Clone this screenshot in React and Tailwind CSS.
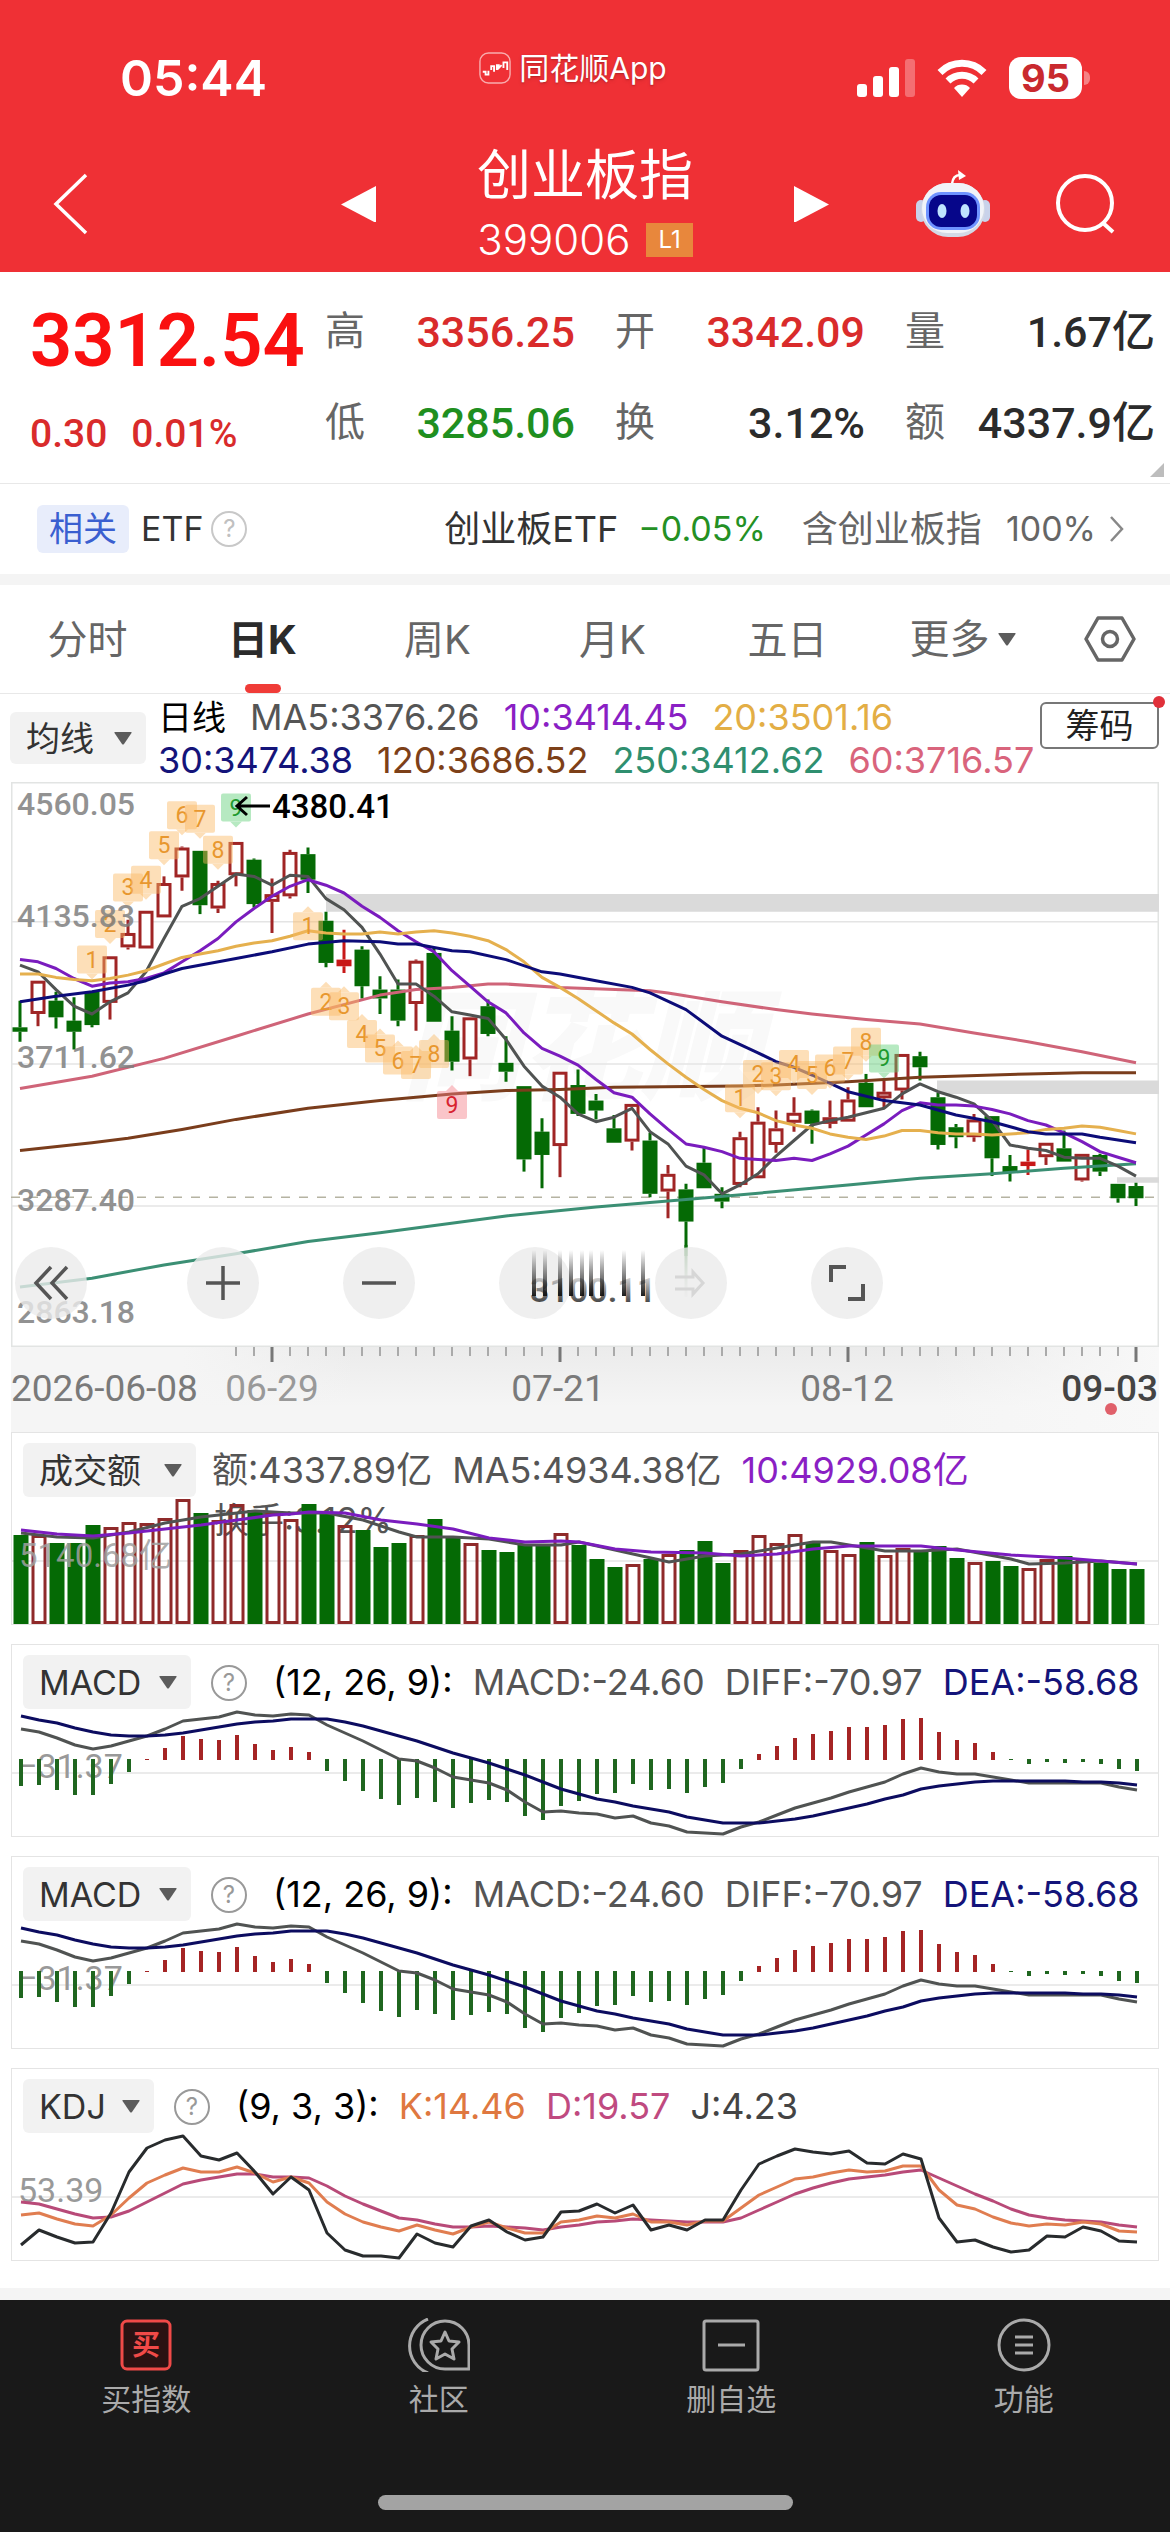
import React, { useState } from "react";

const STEP = 18;
const START = 9;
const WIDTH = 1148;

const xAt = (i) => START + i * STEP;
// Candle and average values are stored in axis units, 509 units per full axis
const yAt = (v) => (v - 3) * 1.11;

// [kind, high, bodyTop, bodyBottom, low], kind: u = up, d = down, f = filled up
const CANDLES = [
  ["d", 200, 224, 228, 237], ["u", 182, 182, 212, 223], ["d", 192, 200, 215, 225],
  ["d", 197, 218, 228, 244], ["d", 192, 192, 222, 224], ["u", 160, 160, 202, 217],
  ["u", 127, 139, 152, 154], ["u", 119, 119, 153, 153], ["u", 88, 94, 125, 125],
  ["u", 61, 62, 89, 101], ["d", 65, 65, 114, 122], ["u", 92, 94, 117, 121],
  ["u", 57, 57, 87, 97], ["d", 72, 73, 113, 116], ["u", 90, 104, 111, 139],
  ["u", 64, 66, 106, 108], ["d", 62, 68, 91, 103], ["d", 120, 128, 166, 170],
  ["f", 136, 163, 169, 175], ["d", 151, 154, 187, 198], ["d", 178, 190, 198, 212],
  ["d", 181, 190, 218, 223], ["u", 163, 164, 203, 227], ["d", 152, 157, 219, 219],
  ["d", 214, 227, 255, 263], ["u", 215, 215, 253, 268], ["d", 199, 205, 230, 232],
  ["d", 232, 256, 264, 273], ["d", 277, 277, 343, 354], ["d", 306, 318, 339, 369],
  ["u", 264, 264, 331, 359], ["d", 262, 276, 302, 304], ["d", 284, 290, 299, 307],
  ["d", 303, 315, 328, 328], ["u", 293, 293, 327, 335], ["d", 319, 326, 374, 377],
  ["u", 348, 356, 372, 396], ["d", 365, 370, 399, 466], ["d", 332, 346, 369, 369],
  ["d", 368, 374, 381, 387], ["u", 318, 323, 366, 368], ["u", 296, 309, 360, 360],
  ["u", 299, 315, 330, 337], ["u", 287, 301, 310, 318], ["d", 298, 299, 311, 329],
  ["u", 290, 305, 311, 315], ["u", 278, 289, 309, 309], ["d", 266, 274, 296, 296],
  ["u", 272, 282, 288, 296], ["u", 248, 248, 281, 289], ["d", 246, 250, 260, 272],
  ["d", 283, 287, 330, 334], ["d", 311, 314, 323, 333], ["u", 302, 307, 323, 327],
  ["d", 304, 304, 342, 358], ["d", 339, 349, 355, 363], ["f", 334, 345, 349, 357],
  ["u", 328, 328, 341, 348], ["d", 317, 333, 345, 345], ["u", 338, 338, 362, 363],
  ["d", 338, 339, 354, 358], ["d", 365, 365, 378, 382], ["d", 364, 367, 378, 385],
];

const MA5 = [168, 174, 190, 205, 212, 201, 193, 174, 144, 115, 108, 97, 86, 88, 96, 87, 88, 108, 118, 134, 158, 185, 185, 196, 210, 213, 216, 235, 259, 277, 287, 302, 309, 305, 297, 318, 329, 349, 357, 374, 366, 356, 340, 326, 312, 308, 305, 301, 297, 284, 275, 282, 287, 293, 308, 330, 333, 335, 341, 342, 342, 349, 358];
const MA10 = [163, 165, 171, 180, 187, 184, 183, 180, 175, 165, 155, 144, 129, 117, 106, 97, 91, 96, 103, 115, 125, 137, 147, 156, 173, 187, 201, 211, 229, 243, 250, 258, 271, 283, 287, 302, 316, 329, 332, 336, 342, 343, 344, 342, 344, 338, 331, 321, 311, 299, 292, 294, 294, 295, 298, 302, 308, 312, 319, 327, 336, 341, 346];
const MA20 = [176, 176, 179, 181, 182, 180, 177, 173, 167, 161, 158, 155, 151, 148, 146, 142, 137, 139, 140, 140, 138, 140, 138, 137, 139, 142, 146, 154, 165, 179, 188, 198, 209, 220, 230, 244, 257, 269, 280, 290, 297, 301, 308, 312, 315, 320, 323, 325, 322, 317, 317, 319, 320, 320, 321, 320, 319, 316, 315, 313, 314, 317, 320];

// Slow averages only need a point where they bend: [index, value]
const MA30 = [[0, 201], [2, 196], [4, 192], [6, 186], [7, 182], [8, 176], [9, 171], [12, 162], [14, 156], [16, 149], [18, 146], [20, 147], [21, 149], [22, 149], [23, 152], [24, 155], [25, 156], [27, 163], [29, 174], [30, 176], [32, 182], [34, 188], [35, 193], [37, 208], [39, 232], [41, 247], [42, 255], [43, 260], [44, 267], [46, 282], [48, 290], [50, 294], [52, 303], [54, 309], [56, 318], [57, 320], [59, 320], [60, 323], [62, 328]];
const MA60 = [[0, 279], [4, 268], [8, 252], [12, 232], [16, 212], [20, 195], [22, 190], [24, 188], [26, 185], [27, 185], [30, 188], [35, 191], [36, 193], [39, 201], [42, 208], [44, 212], [47, 217], [50, 221], [53, 229], [56, 237], [59, 246], [62, 256]];
const MA120 = [[0, 335], [4, 328], [6, 324], [9, 316], [12, 307], [16, 297], [20, 290], [24, 284], [27, 281], [30, 280], [33, 278], [40, 277], [42, 276], [46, 273], [50, 269], [56, 266], [59, 265], [62, 265]];
const MA250 = [[0, 458], [4, 450], [8, 438], [12, 428], [16, 417], [20, 409], [27, 394], [32, 386], [37, 379], [42, 372], [46, 366], [50, 360], [54, 356], [58, 351], [62, 347]];

// [index, count, label height, colour, points down at the candle]
const TURNS = [
  [4, 1, 163, "o", true], [5, 2, 131, "o", true], [6, 3, 98, "o", true], [7, 4, 91, "o", true],
  [8, 5, 60, "o", true], [9, 6, 33, "o", true], [10, 7, 36, "o", true], [11, 8, 64, "o", true],
  [12, 9, 26, "g", true],
  [16, 1, 133, "o", false], [17, 2, 201, "o", false], [18, 3, 205, "o", false], [19, 4, 230, "o", false],
  [20, 5, 243, "o", false], [21, 6, 254, "o", false], [22, 7, 258, "o", false], [23, 8, 248, "o", false],
  [24, 9, 294, "r", false],
  [40, 1, 288, "o", true], [41, 2, 266, "o", true], [42, 3, 268, "o", true], [43, 4, 257, "o", true],
  [44, 5, 267, "o", true], [45, 6, 261, "o", true], [46, 7, 254, "o", true], [47, 8, 237, "o", true],
  [48, 9, 252, "g", true],
];

const TURN_COLORS = {
  o: { box: "#fbb963", text: "#e8972e" },
  g: { box: "#5fcf77", text: "#1f9a2f" },
  r: { box: "#f5808a", text: "#d8232f" },
};

const VOLUMES = [89, 89, 81, 81, 99, 97, 102, 101, 106, 125, 111, 104, 120, 114, 113, 105, 120, 110, 99, 94, 77, 81, 89, 105, 86, 81, 74, 72, 80, 78, 91, 79, 65, 57, 60, 65, 70, 74, 83, 61, 74, 89, 81, 90, 82, 74, 70, 82, 69, 76, 74, 78, 66, 62, 63, 58, 56, 65, 68, 64, 61, 55, 55];
const VOL_MA5 = [[0, 91], [2, 87], [4, 86], [6, 92], [8, 101], [10, 107], [12, 111], [13, 113], [15, 111], [17, 111], [19, 104], [21, 92], [22, 87], [24, 87], [26, 85], [28, 79], [30, 79], [31, 82], [33, 74], [35, 66], [36, 62], [38, 68], [40, 70], [42, 76], [44, 82], [45, 82], [46, 79], [48, 73], [50, 73], [52, 75], [55, 65], [56, 60], [58, 61], [60, 63], [62, 60]];
const VOL_MA10 = [[0, 94], [2, 90], [4, 88], [6, 91], [8, 95], [10, 99], [12, 104], [14, 109], [15, 110], [16, 112], [18, 111], [20, 104], [22, 100], [24, 95], [26, 86], [28, 82], [30, 83], [31, 82], [33, 75], [35, 72], [38, 71], [40, 68], [42, 70], [44, 75], [46, 78], [50, 78], [52, 74], [55, 69], [58, 66], [62, 60]];

const MACD_BARS = [-27, -26, -31, -36, -36, -25, -13, 1, 12, 24, 21, 20, 25, 16, 10, 13, 8, -12, -22, -32, -40, -46, -39, -43, -49, -44, -41, -43, -57, -61, -47, -42, -35, -34, -25, -31, -30, -34, -28, -24, -10, 6, 14, 22, 26, 29, 33, 33, 35, 41, 42, 28, 20, 17, 8, -1, -5, -3, -4, -3, -5, -10, -12];
const DIFF = [85, 88, 94, 101, 105, 102, 97, 92, 85, 77, 75, 73, 68, 71, 72, 70, 71, 81, 89, 97, 106, 115, 117, 124, 133, 136, 139, 146, 158, 168, 167, 169, 170, 174, 172, 179, 182, 188, 189, 190, 183, 178, 171, 164, 159, 154, 148, 143, 138, 130, 124, 128, 130, 130, 133, 136, 139, 139, 139, 139, 139, 143, 146];
const DEA = [72, 76, 79, 84, 88, 91, 92, 92, 91, 89, 86, 83, 80, 78, 77, 75, 75, 75, 78, 82, 87, 92, 97, 103, 109, 114, 119, 125, 131, 138, 145, 150, 155, 158, 162, 165, 168, 173, 176, 179, 179, 179, 177, 175, 172, 168, 164, 160, 155, 151, 145, 142, 140, 138, 137, 137, 137, 137, 137, 138, 138, 139, 141];

const KDJ_K = [147, 145, 151, 156, 158, 147, 130, 115, 107, 100, 104, 104, 99, 105, 114, 109, 115, 134, 146, 154, 159, 163, 157, 162, 166, 159, 154, 160, 165, 165, 154, 152, 148, 150, 146, 154, 154, 157, 153, 153, 140, 127, 119, 111, 109, 105, 102, 104, 103, 98, 98, 122, 137, 141, 149, 155, 158, 156, 157, 154, 156, 163, 164];
const KDJ_D = [134, 136, 141, 146, 150, 149, 143, 134, 125, 116, 112, 109, 106, 106, 109, 109, 110, 118, 128, 136, 143, 150, 152, 156, 159, 159, 158, 159, 160, 162, 159, 157, 154, 153, 151, 152, 153, 154, 154, 154, 150, 142, 134, 126, 120, 115, 111, 109, 107, 104, 102, 110, 118, 126, 133, 141, 147, 150, 152, 153, 154, 157, 159];
const KDJ_J = [177, 162, 169, 175, 174, 145, 104, 80, 72, 68, 88, 92, 85, 104, 126, 109, 122, 165, 182, 188, 188, 190, 166, 175, 179, 158, 152, 164, 172, 169, 144, 143, 136, 145, 137, 162, 157, 162, 152, 152, 122, 96, 88, 81, 84, 86, 83, 95, 96, 86, 91, 150, 174, 172, 179, 184, 182, 168, 169, 159, 163, 173, 174];

const DOWN = "#056a05";
const UP = "#a02525";

const STATS = [
  { label: "高", value: "3356.25", color: "text-[#d92b2b]" },
  { label: "开", value: "3342.09", color: "text-[#d92b2b]" },
  { label: "量", value: "1.67亿", color: "text-[#2b2b2b]" },
  { label: "低", value: "3285.06", color: "text-[#1f8f1f]" },
  { label: "换", value: "3.12%", color: "text-[#2b2b2b]" },
  { label: "额", value: "4337.9亿", color: "text-[#2b2b2b]" },
];

const TABS = ["分时", "日K", "周K", "月K", "五日"];

function Line({ data, color, y = (v) => v, width = 3 }) {
  const points = data
    .map((d, i) => (Array.isArray(d) ? [xAt(d[0]), y(d[1])] : [xAt(i), y(d)]))
    .map(([px, py]) => `${px},${py.toFixed(1)}`)
    .join(" ");
  return <polyline points={points} fill="none" stroke={color} strokeWidth={width} strokeLinejoin="round" />;
}

function Caret({ className }) {
  return (
    <svg viewBox="0 0 18 14" className={className} fill="#5c5c5c">
      <path d="M1 1h16q1 0 .5 1L10 13q-1 1-2 0L.5 2Q0 1 1 1z" />
    </svg>
  );
}

function IndicatorSelect({ label, value, className }) {
  return (
    <div className={`relative shrink-0 rounded-md bg-[#f2f2f2] ${className}`}>
      <select
        aria-label={label}
        className="h-full w-full appearance-none bg-transparent pl-4 text-[34px] text-[#333] outline-none"
      >
        <option>{value}</option>
      </select>
      <Caret className="pointer-events-none absolute right-3.5 top-1/2 w-[18px] -translate-y-1/2" />
    </div>
  );
}

function Help({ className }) {
  return (
    <button
      aria-label="说明"
      className={`flex h-9 w-9 shrink-0 items-center justify-center rounded-full border-2 text-2xl leading-none ${className}`}
    >
      ?
    </button>
  );
}

function Header() {
  return (
    <header className="bg-[#ef3035] pb-2 pt-11 text-white">
      <div className="grid h-[68px] grid-cols-[1fr_auto_1fr] items-center px-20">
        <span className="pl-10 text-[50px] font-semibold leading-[68px]">05:44</span>
        <span className="mb-5 mr-6 flex items-center gap-2 text-[30px] leading-9 text-shadow-md">
          <svg viewBox="0 0 34 34" className="w-8" fill="none" stroke="currentColor">
            <rect x="1" y="1" width="32" height="32" rx="9" strokeWidth="1.5" opacity=".6" />
            <path d="M4 21h3v3h3v-4M13 19v-4h3v6M19 19v-5h2v3l3-3M26 17v-6h4v8" strokeWidth="2" />
          </svg>
          同花顺App
        </span>
        <div className="flex items-center justify-end gap-[22px]">
          <svg viewBox="0 0 58 38" className="w-[58px]" fill="currentColor">
            <rect x="0" y="25" width="10" height="13" rx="3" />
            <rect x="16" y="17" width="10" height="21" rx="3" />
            <rect x="32" y="8" width="10" height="30" rx="3" />
            <rect x="48" y="0" width="10" height="38" rx="3" opacity=".3" />
          </svg>
          <svg viewBox="0 0 50 38" className="w-[50px]" fill="none" stroke="currentColor" strokeWidth="7">
            <path d="M3 13.500a31 31 0 0 1 44 0" />
            <path d="M11 22a20 20 0 0 1 28 0" />
            <path d="M25 38l-8-9a11 11 0 0 1 16 0z" fill="currentColor" stroke="none" />
          </svg>
          <div className="flex items-center gap-0.5">
            <span className="flex h-[42px] w-[73px] items-center justify-center rounded-xl bg-white text-[38px] font-bold leading-none text-[#c9292e]">
              95
            </span>
            <span className="h-3.5 w-1.5 rounded-r-full bg-white/40" />
          </div>
        </div>
      </div>

      <div className="mt-8 grid grid-cols-[1fr_auto_1fr] items-center px-[53px]">
        <button aria-label="返回" className="w-9">
          <svg viewBox="0 0 36 62" fill="none" stroke="currentColor" strokeWidth="3.500">
            <path d="M33 2L3 31l30 29" />
          </svg>
        </button>
        <div className="flex w-[488px] items-center justify-between">
          <button aria-label="上一个">
            <svg viewBox="0 0 36 38" className="w-[35px]" fill="currentColor">
              <path d="M0 19L36 0v38z" />
            </svg>
          </button>
          <div className="flex flex-col items-center gap-2">
            <h1 className="text-[54px] leading-[64px]">创业板指</h1>
            <div className="flex items-center gap-4">
              <span className="text-[42px] font-light leading-[48px]">399006</span>
              <span className="bg-[#e8873c] px-3 text-2xl leading-[34px]">L1</span>
            </div>
          </div>
          <button aria-label="下一个">
            <svg viewBox="0 0 36 38" className="w-[35px]" fill="currentColor">
              <path d="M36 19L0 0v38z" />
            </svg>
          </button>
        </div>
        <div className="flex items-center justify-end gap-[65px]">
          <button aria-label="智能助手">
            <svg viewBox="0 0 74 68" className="w-[74px]">
              <path d="M36 14q1-9 8-9" stroke="#fff" strokeWidth="2.500" fill="none" />
              <path d="M42 0l8 6-7 4z" fill="#fff" />
              <rect x="0" y="30" width="10" height="22" rx="5" fill="#c9d2ea" />
              <rect x="64" y="30" width="10" height="22" rx="5" fill="#c9d2ea" />
              <rect x="5" y="13" width="64" height="54" rx="27" fill="#d3d9e6" />
              <rect x="6" y="13" width="62" height="50" rx="25" fill="#f1f3f8" />
              <rect x="10" y="22" width="54" height="38" rx="15" fill="#6e93ff" />
              <rect x="13" y="25" width="48" height="32" rx="12" fill="#06068a" />
              <ellipse cx="26" cy="41" rx="4.500" ry="7" fill="#bfe4ff" />
              <ellipse cx="49" cy="41" rx="4.500" ry="7" fill="#bfe4ff" />
            </svg>
          </button>
          <button aria-label="搜索">
            <svg viewBox="0 0 62 62" className="w-[62px]" fill="none" stroke="currentColor" strokeWidth="4">
              <circle cx="30" cy="30" r="27" />
              <path d="M48 50l10 9" />
            </svg>
          </button>
        </div>
      </div>
    </header>
  );
}

function Quote() {
  return (
    <section className="relative flex border-b border-[#e8e8e8] pb-[29px] pl-[30px] pr-[15px] pt-8 font-['Roboto','Noto_Sans_CJK_SC',sans-serif]">
      <div className="w-[295px]">
        <p className="text-[74px] font-semibold leading-[74px] text-[#fa1010]">3312.54</p>
        <p className="mt-9 flex gap-6 text-[39px] font-medium leading-10 text-[#d92b2b]">
          <span>0.30</span>
          <span>0.01%</span>
        </p>
      </div>
      <dl className="grid flex-1 grid-cols-3 content-start gap-x-10 gap-y-[43px] pt-1">
        {STATS.map((s) => (
          <div key={s.label} className="flex items-center justify-between leading-[48px]">
            <dt className="text-[40px] text-[#666]">{s.label}</dt>
            <dd className={`whitespace-nowrap text-[43px] font-medium ${s.color}`}>{s.value}</dd>
          </div>
        ))}
      </dl>
      <svg viewBox="0 0 14 14" className="absolute bottom-1.5 right-1.5 w-3.5" fill="#bdbdbd">
        <path d="M14 0v14H0z" />
      </svg>
    </section>
  );
}

function RelatedFund() {
  return (
    <section className="flex items-center border-b-[11px] border-[#f4f4f4] py-[21px] pl-[37px] pr-[46px] text-[34px] leading-[48px]">
      <span className="rounded-md bg-[#e8edfb] px-3 text-[#3a5fd0]">相关</span>
      <span className="ml-3 text-[#333]">ETF</span>
      <Help className="ml-2 border-[#c8c8c8] text-[#c0c0c0]" />
      <a href="#etf" className="ml-auto flex items-center text-[#666]">
        <span className="text-[36px] text-[#333]">创业板ETF</span>
        <span className="ml-5 text-[#249024]">−0.05%</span>
        <span className="ml-9 text-[36px]">含创业板指</span>
        <span className="ml-6">100%</span>
        <svg viewBox="0 0 14 26" className="ml-3.5 w-3.5" fill="none" stroke="#888" strokeWidth="2.500">
          <path d="M1 1l11 12L1 25" />
        </svg>
      </a>
    </section>
  );
}

function PeriodTabs() {
  const [active, setActive] = useState("日K");
  return (
    <nav className="grid grid-cols-[repeat(6,minmax(0,1fr))_120px] border-b border-[#e8e8e8] text-[40px] leading-[56px] text-[#666]">
      {TABS.map((tab) => (
        <button
          key={tab}
          onClick={() => setActive(tab)}
          className={`relative pb-[25px] pt-[27px] ${tab === active ? "font-bold text-[#2b2b2b]" : ""}`}
        >
          {tab}
          {tab === active && (
            <span className="absolute bottom-0 left-1/2 h-[9px] w-9 -translate-x-1/2 rounded-full bg-[#f03c38]" />
          )}
        </button>
      ))}
      <button className="flex items-center justify-center gap-2">
        更多
        <Caret className="w-[18px]" />
      </button>
      <button aria-label="设置" className="flex items-center justify-center">
        <svg viewBox="0 0 52 46" className="w-[52px]" fill="none" stroke="#666" strokeWidth="3.500" strokeLinejoin="round">
          <path d="M14 2h24l12 21-12 21H14L2 23z" />
          <circle cx="26" cy="23" r="7.500" />
        </svg>
      </button>
    </nav>
  );
}

function Legend() {
  return (
    <div className="flex items-start pl-2.5 pr-[11px]">
      <IndicatorSelect label="主图指标" value="均线" className="mt-[18px] h-[52px] w-[136px]" />
      <div className="ml-3 whitespace-nowrap pt-0.5 text-[36px] leading-[43px]">
        <p className="flex gap-6">
          <span className="text-[34px] text-black">日线</span>
          <span className="text-[#555]">MA5:3376.26</span>
          <span className="text-[#8a1fc4]">10:3414.45</span>
          <span className="text-[#e3ae45]">20:3501.16</span>
        </p>
        <p className="flex gap-6">
          <span className="text-[#14147a]">30:3474.38</span>
          <span className="text-[#7d4018]">120:3686.52</span>
          <span className="text-[#2f8f6f]">250:3412.62</span>
          <span className="text-[#d9647c]">60:3716.57</span>
        </p>
      </div>
      <button className="relative ml-auto mt-2 h-[47px] w-[119px] shrink-0 rounded-md border-2 border-[#777] text-[34px] leading-[42px] text-[#222]">
        筹码
        <span className="absolute -right-2 -top-2 h-3 w-3 rounded-full bg-[#e0303a]" />
      </button>
    </div>
  );
}

function Turn({ index, count, level, tone, pointsDown }) {
  const x = xAt(index);
  const y = yAt(level);
  const { box, text } = TURN_COLORS[tone];
  return (
    <g>
      <g fill={box} opacity=".45">
        <rect x={x - 15} y={y - 14} width="30" height="28" rx="2" />
        {pointsDown ? (
          <path d={`M${x - 6} ${y + 14}h12l-6 6z`} />
        ) : (
          <path d={`M${x - 6} ${y - 14}h12l-6-6z`} />
        )}
      </g>
      <text x={x} y={y + 8} textAnchor="middle" fontSize="23" fill={text}>
        {count}
      </text>
    </g>
  );
}

function CandleChart() {
  const axisLabels = [
    ["4560.05", 33],
    ["4135.83", 145],
    ["3711.62", 286],
    ["3287.40", 429],
    ["2863.18", 541],
  ];
  return (
    <svg viewBox="0 0 1148 565" className="block w-full font-['Roboto',sans-serif]">
      <defs>
        <linearGradient id="fade" x1="0" y1="0" x2="0" y2="1">
          <stop offset="0" stopColor="#111" stopOpacity="0" />
          <stop offset="1" stopColor="#111" stopOpacity=".95" />
        </linearGradient>
        <linearGradient id="wick" x1="0" y1="0" x2="0" y2="1">
          <stop offset="0" stopColor={DOWN} />
          <stop offset="1" stopColor="#ccc" stopOpacity=".3" />
        </linearGradient>
      </defs>
      <rect x="0.500" y="0.500" width="1147" height="564" fill="none" stroke="#e2e4e3" strokeWidth="2" />
      <text
        x="570"
        y="308"
        textAnchor="middle"
        fontSize="120"
        fontWeight="900"
        fontStyle="italic"
        fill="#f9f9f9"
        className="font-['Noto_Sans_CJK_SC',sans-serif]"
      >
        同花顺
      </text>
      {[129, 257, 385].map((v) => (
        <path key={v} d={`M0 ${yAt(v)}H${WIDTH}`} stroke="#e4e4e4" strokeWidth="1.500" />
      ))}
      <path d={`M315 ${yAt(104)}H${WIDTH}V${yAt(120)}H315z`} fill="#dadada" />
      <path d={`M926 ${yAt(272)}H${WIDTH}V${yAt(284)}H926z`} fill="#dadada" />
      <path d={`M1106 ${yAt(359)}H${WIDTH}V${yAt(364)}H1106z`} fill="#dadada" />
      <path d={`M0 ${yAt(377)}H${WIDTH}`} stroke="#b5b3a2" strokeWidth="1.500" strokeDasharray="9 9" />

      {CANDLES.map(([kind, high, top, bottom, low], i) => {
        const x = xAt(i);
        const color = kind === "d" ? DOWN : kind === "f" ? "#c81818" : UP;
        const wickEnd = i === 37 ? 430 : low;
        return (
          <g key={i} fill={color} stroke={color}>
            <path d={`M${x} ${yAt(high)}V${yAt(top)}M${x} ${yAt(bottom)}V${yAt(wickEnd)}`} strokeWidth="3" />
            {kind === "u" ? (
              <rect x={x - 6} y={yAt(top) + 1.5} width="12" height={Math.max(yAt(bottom) - yAt(top) - 3, 2)} fill="white" strokeWidth="3" />
            ) : (
              <rect x={x - 7.5} y={yAt(top)} width="15" height={yAt(bottom) - yAt(top)} stroke="none" />
            )}
          </g>
        );
      })}
      <rect x={xAt(37) - 1.5} y={yAt(420)} width="3" height="52" fill="url(#wick)" />

      <Line data={MA120} color="#7a3d1c" y={yAt} />
      <Line data={MA60} color="#cf6478" y={yAt} />
      <Line data={MA250} color="#3b8f74" y={yAt} />
      <Line data={MA5} color="#505352" y={yAt} />
      <Line data={MA10} color="#7a1cbe" y={yAt} />
      <Line data={MA20} color="#e5b04e" y={yAt} />
      <Line data={MA30} color="#0c0c78" y={yAt} />

      {TURNS.map(([index, count, level, tone, pointsDown]) => (
        <Turn key={index} index={index} count={count} level={level} tone={tone} pointsDown={pointsDown} />
      ))}

      <path d="M259 24H226M236 15l-10 9 10 9" stroke="#000" strokeWidth="3" fill="none" />
      <text x="261" y="36" fontSize="33" fontWeight="500">
        4380.41
      </text>
      {axisLabels.map(([text, y]) => (
        <text key={text} x="6" y={y} fontSize="32" fontWeight="500" fill="#808080" opacity=".85">
          {text}
        </text>
      ))}
    </svg>
  );
}

function ChartTools() {
  const round = "flex h-[72px] w-[72px] items-center justify-center rounded-full bg-[#ebebeb]/80";
  return (
    <div className="absolute bottom-7 left-1 flex items-center gap-[84px]">
      <button aria-label="更早" className={`${round} mr-4`}>
        <svg viewBox="0 0 36 36" className="w-9" fill="none" stroke="#555" strokeWidth="3.500">
          <path d="M18 2L3 18l15 16M34 2L19 18l15 16" />
        </svg>
      </button>
      <button aria-label="放大" className={round}>
        <svg viewBox="0 0 36 36" className="w-9" stroke="#555" strokeWidth="3.500">
          <path d="M1 18h34M18 1v34" />
        </svg>
      </button>
      <button aria-label="缩小" className={round}>
        <svg viewBox="0 0 36 36" className="w-9" stroke="#555" strokeWidth="3.500">
          <path d="M1 18h34" />
        </svg>
      </button>
      <button aria-label="左移" className={round} />
      <button aria-label="右移" className={round}>
        <svg viewBox="0 0 36 36" className="w-9" fill="none" stroke="#d6d6d6" strokeWidth="3">
          <path d="M2 12h18V7l10 11-10 11v-5H2" />
        </svg>
      </button>
      <button aria-label="全屏" className={round}>
        <svg viewBox="0 0 36 36" className="w-9" fill="none" stroke="#555" strokeWidth="4">
          <path d="M2 17V2h15M34 19v15H19" />
        </svg>
      </button>
    </div>
  );
}

// Lowest price label, faded into the toolbar
function LowLabel() {
  const stems = [523, 534, 549, 560, 571, 580, 591, 613, 632];
  return (
    <svg viewBox="0 0 1148 565" className="pointer-events-none absolute inset-0 w-full font-['Roboto',sans-serif]">
      {stems.map((x) => (
        <rect key={x} x={x - 2} y="468" width="4" height="46" fill="url(#fade)" />
      ))}
      <text x="519" y="520" fontSize="34" fontWeight="600" fill="url(#fade)">
        3100.11
      </text>
    </svg>
  );
}

function DateAxis() {
  const ticks = Array.from({ length: 51 }, (_, k) => k + 12);
  return (
    <svg viewBox="0 0 1148 85" className="block w-full font-['Roboto',sans-serif]" fontSize="37" fill="#7a7a7a">
      <defs>
        <linearGradient id="axis" x1="0" y1="0" x2="0" y2="1">
          <stop offset="0" stopColor="#ebebeb" />
          <stop offset="0.700" stopColor="#f5f5f5" />
        </linearGradient>
        <linearGradient id="axisEdges">
          <stop offset="0.150" stopColor="#f5f5f5" />
          <stop offset="0.300" stopColor="#f5f5f5" stopOpacity="0" />
          <stop offset="0.800" stopColor="#f8f8f8" stopOpacity="0" />
          <stop offset="1" stopColor="#f8f8f8" />
        </linearGradient>
      </defs>
      <rect width="1148" height="85" fill="url(#axis)" />
      <rect width="1148" height="85" fill="url(#axisEdges)" />
      {ticks.map((i) => {
        const major = (i - 14) % 16 === 0;
        return (
          <path
            key={i}
            d={`M${xAt(i)} 0V${major ? 15 : 9}`}
            stroke={major ? "#777" : "#aaa"}
            strokeWidth={major ? 3 : 2}
          />
        );
      })}
      <text x="0" y="54">2026-06-08</text>
      <text x="261" y="54" textAnchor="middle" fill="#999">06-29</text>
      <text x="547" y="54" textAnchor="middle">07-21</text>
      <text x="836" y="54" textAnchor="middle">08-12</text>
      <text x="1147" y="54" textAnchor="end" fill="#444" fontWeight="500">09-03</text>
      <circle cx="1100" cy="62" r="6" fill="#e0606a" />
    </svg>
  );
}

function Panel({ header, children }) {
  return (
    <section className="mx-[11px] mb-[19px] border border-[#e4e4e4]">
      <div className="flex h-16 items-end gap-5 whitespace-nowrap pl-[11px] text-[36px] leading-[54px]">{header}</div>
      <svg viewBox="0 65 1146 127" className="block w-full">
        {children}
      </svg>
    </section>
  );
}

function VolumePanel() {
  return (
    <Panel
      header={
        <>
          <IndicatorSelect label="副图指标" value="成交额" className="-mr-1 h-[54px] w-[173px]" />
          <span className="text-[#555]">额:4337.89亿</span>
          <span className="text-[#555]">MA5:4934.38亿</span>
          <span className="text-[#8a1fc4]">10:4929.08亿</span>
        </>
      }
    >
      <path d="M0 129H1148" stroke="#e4e4e4" strokeWidth="1.500" />
      <text x="202" y="101" fontSize="35" fill="#555" className="font-['Inter','Noto_Sans_CJK_SC',sans-serif]">
        换手:3.12%
      </text>
      {VOLUMES.map((h, i) => {
        const x = xAt(i);
        return CANDLES[i][0] === "d" ? (
          <rect key={i} x={x - 7.5} y={192 - h} width="15" height={h} fill={DOWN} />
        ) : (
          <rect key={i} x={x - 6} y={193.5 - h} width="12" height={h - 3} fill="none" stroke="#8f2a2a" strokeWidth="3" />
        );
      })}
      <Line data={VOL_MA5} color="#505352" y={(v) => 192 - v} />
      <Line data={VOL_MA10} color="#7a1cbe" y={(v) => 192 - v} />
      <text x="7" y="135" fontSize="33" fill="#a0a0a0" opacity=".85" className="font-['Roboto','Noto_Sans_CJK_SC',sans-serif]">
        5140.68亿
      </text>
    </Panel>
  );
}

function MacdPanel() {
  return (
    <Panel
      header={
        <>
          <IndicatorSelect label="副图指标" value="MACD" className="h-[54px] w-[168px]" />
          <Help className="mb-2 border-[#999] text-[#999]" />
          <span className="ml-1.5 text-black">(12, 26, 9):</span>
          <span className="text-[#555]">MACD:-24.60</span>
          <span className="text-[#555]">DIFF:-70.97</span>
          <span className="text-[#14147a]">DEA:-58.68</span>
        </>
      }
    >
      <path d="M0 129H1148" stroke="#e4e4e4" strokeWidth="1.500" />
      <text x="6" y="134" fontSize="34" fill="#999" className="font-['Roboto',sans-serif]">
        −31.37
      </text>
      {MACD_BARS.map((v, i) => (
        <rect
          key={i}
          x={xAt(i) - 2}
          y={v > 0 ? 116 - v : 115}
          width="4"
          height={Math.abs(v)}
          fill={v > 0 ? "#a52424" : "#1f661f"}
        />
      ))}
      <Line data={DIFF} color="#505352" />
      <Line data={DEA} color="#0c0c60" />
    </Panel>
  );
}

function KdjPanel() {
  return (
    <Panel
      header={
        <>
          <IndicatorSelect label="副图指标" value="KDJ" className="h-[54px] w-[131px]" />
          <Help className="mb-2 border-[#999] text-[#999]" />
          <span className="ml-1.5 text-black">(9, 3, 3):</span>
          <span className="text-[#df7840]">K:14.46</span>
          <span className="text-[#c04a80]">D:19.57</span>
          <span className="text-[#444]">J:4.23</span>
        </>
      }
    >
      <path d="M0 129H1148" stroke="#e4e4e4" strokeWidth="1.500" />
      <text x="6" y="134" fontSize="34" fill="#999" className="font-['Roboto',sans-serif]">
        53.39
      </text>
      <Line data={KDJ_D} color="#b84a78" />
      <Line data={KDJ_K} color="#e07d50" />
      <Line data={KDJ_J} color="#282b2d" />
    </Panel>
  );
}

function BottomNav() {
  const stroke = { fill: "none", stroke: "currentColor", strokeWidth: 3 };
  const items = [
    {
      label: "买指数",
      icon: (
        <svg viewBox="0 0 54 54" className="w-[54px] text-[#f04a48]" {...stroke}>
          <rect x="3" y="3" width="48" height="48" rx="5" fill="#2a1212" />
          <text x="27" y="37" textAnchor="middle" fontSize="28" fontWeight="700" fill="#f04a48" stroke="none">
            买
          </text>
        </svg>
      ),
    },
    {
      label: "社区",
      icon: (
        <svg viewBox="0 0 62 54" className="h-[54px]" {...stroke}>
          <path d="M61 51H37a24 24 0 1 1 24-24z" strokeLinejoin="round" />
          <path d="M20 1a29 29 0 0 0 0 54" />
          <path d="M37 14l4 9 10 1-7 7 2 10-9-5-9 5 2-10-7-7 10-1z" strokeLinejoin="round" />
        </svg>
      ),
    },
    {
      label: "删自选",
      icon: (
        <svg viewBox="0 0 58 54" className="h-[54px]" {...stroke}>
          <rect x="2" y="3" width="54" height="49" rx="2" />
          <path d="M16 27h27" />
        </svg>
      ),
    },
    {
      label: "功能",
      icon: (
        <svg viewBox="0 0 54 54" className="w-[54px]" {...stroke}>
          <circle cx="27" cy="27" r="25" />
          <path d="M18 19h18M18 27h18M18 35h18" />
        </svg>
      ),
    },
  ];
  return (
    <footer className="grow bg-[#191919] pb-6 pt-[18px] text-[#aaa]">
      <nav className="grid grid-cols-4">
        {items.map((item) => (
          <button key={item.label} className="flex flex-col items-center gap-[9px] text-[30px] leading-9">
            {item.icon}
            {item.label}
          </button>
        ))}
      </nav>
      <div className="mx-auto mt-[78px] h-[15px] w-[415px] rounded-full bg-[#a3a3a3]" />
    </footer>
  );
}

export default function App() {
  return (
    <div className="flex min-h-screen flex-col bg-white font-['Inter','Noto_Sans_CJK_SC',sans-serif]">
      <Header />
      <Quote />
      <RelatedFund />
      <PeriodTabs />
      <Legend />
      <main className="border-b-[12px] border-[#f4f4f4] pb-2">
        <div className="relative mx-[11px]">
          <CandleChart />
          <ChartTools />
          <LowLabel />
        </div>
        <div className="mx-[11px]">
          <DateAxis />
        </div>
        <VolumePanel />
        <MacdPanel />
        <MacdPanel />
        <KdjPanel />
      </main>
      <BottomNav />
    </div>
  );
}
